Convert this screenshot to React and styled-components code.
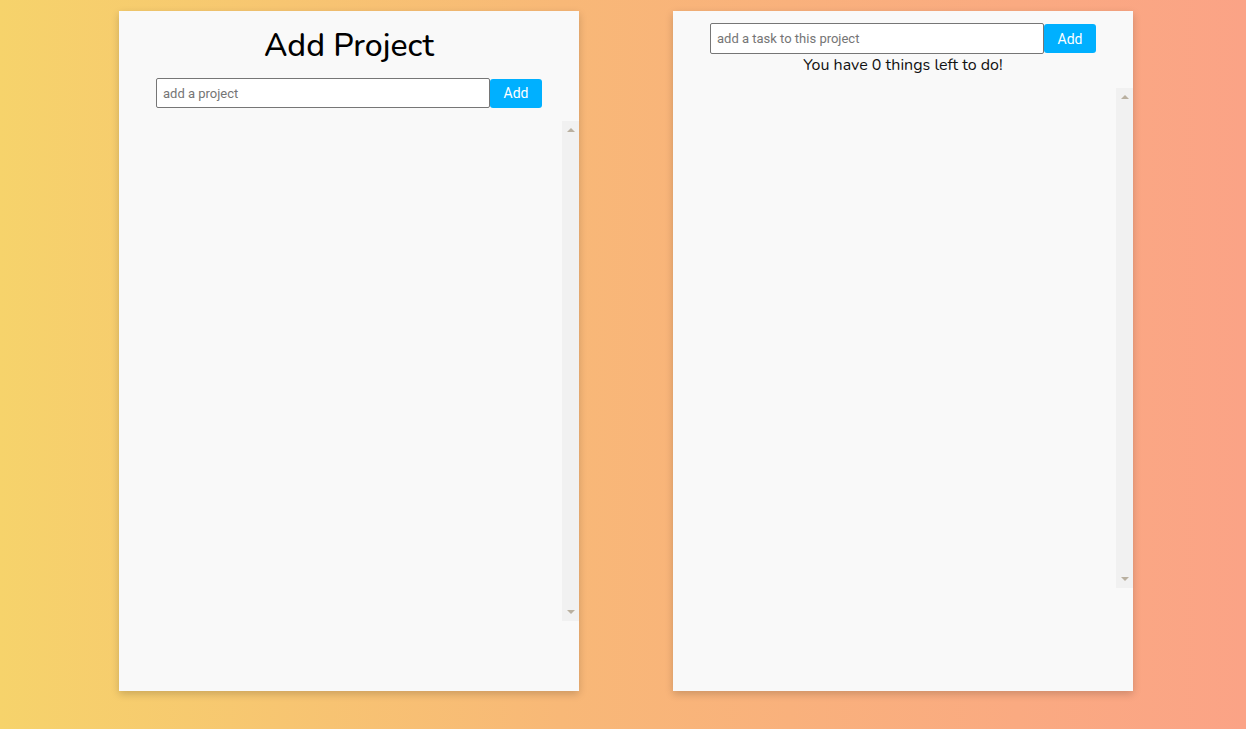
import styled, { createGlobalStyle } from "styled-components";

const GlobalStyle = createGlobalStyle`
    html, body {
        margin: 0;
        padding: 0;
        height: 100%;
    }
    body {
        font-family: "Nunito", Lato, "Noto Sans", sans-serif;
        background: linear-gradient(to right, #f6d36b 0%, #f8b877 45%, #fba386 100%);
    }
    #root {
        height: 100%;
    }
`;

const Page = styled.div`
    display: flex;
    gap: 94px;
    padding: 11px 0 0 119px;
    height: 729px;
    box-sizing: border-box;
`;

const Card = styled.div`
    width: 460px;
    height: 680px;
    background: #f9f9f9;
    box-shadow: 0 3px 8px rgba(0, 0, 0, 0.18);
    display: flex;
    flex-direction: column;
    align-items: center;
    padding-top: 12px;
    box-sizing: border-box;
`;

const Title = styled.h1`
    margin: 3px 0 0;
    font-size: 32px;
    font-weight: 500;
    color: #000;
    line-height: 40px;
    height: 52px;
`;

const Form = styled.div`
    display: flex;
    align-items: center;
`;

const Input = styled.input`
    width: 334px;
    height: ${p => p.$h}px;
    box-sizing: border-box;
    border: 1px solid #767676;
    border-radius: 2px;
    background: #fff;
    padding: 0 6px;
    font-family: Roboto, "Liberation Sans", sans-serif;
    font-size: 13px;
    outline: none;

    &::placeholder {
        color: #757575;
    }
`;

const AddButton = styled.button`
    width: 52px;
    height: 29px;
    border: none;
    border-radius: 3px;
    background: #00b0ff;
    color: #fff;
    font-family: Roboto, "Liberation Sans", sans-serif;
    font-size: 14px;
    cursor: pointer;
`;

const Counter = styled.div`
    font-size: 16px;
    color: #111;
    line-height: 22px;
`;

const ScrollArea = styled.div`
    align-self: stretch;
    height: 500px;
    margin-top: ${p => p.$gap}px;
    display: flex;
`;

const List = styled.ul`
    flex: 1;
    margin: 0;
    padding: 0;
    list-style: none;
`;

const Track = styled.div`
    width: 17px;
    background: #f1f1f1;
    display: flex;
    flex-direction: column;
    justify-content: space-between;
    align-items: center;
    padding: 7px 0;
    box-sizing: border-box;
`;

const Arrow = styled.div`
    width: 0;
    height: 0;
    border-left: 4px solid transparent;
    border-right: 4px solid transparent;
    ${p => p.$down
        ? "border-top: 4px solid #b9b0a0;"
        : "border-bottom: 4px solid #b9b0a0;"}
`;

const Scroller = ({ gap }) => (
    <ScrollArea $gap={gap}>
        <List />
        <Track>
            <Arrow />
            <Arrow $down />
        </Track>
    </ScrollArea>
);

export default function App() {
    return (
        <>
            <GlobalStyle />
            <Page>
                <Card>
                    <Title>Add Project</Title>
                    <Form>
                        <Input $h={30} placeholder="add a project" />
                        <AddButton>Add</AddButton>
                    </Form>
                    <Scroller gap={13} />
                </Card>

                <Card>
                    <Form>
                        <Input $h={31} placeholder="add a task to this project" />
                        <AddButton>Add</AddButton>
                    </Form>
                    <Counter>You have 0 things left to do!</Counter>
                    <Scroller gap={12} />
                </Card>
            </Page>
        </>
    );
}
